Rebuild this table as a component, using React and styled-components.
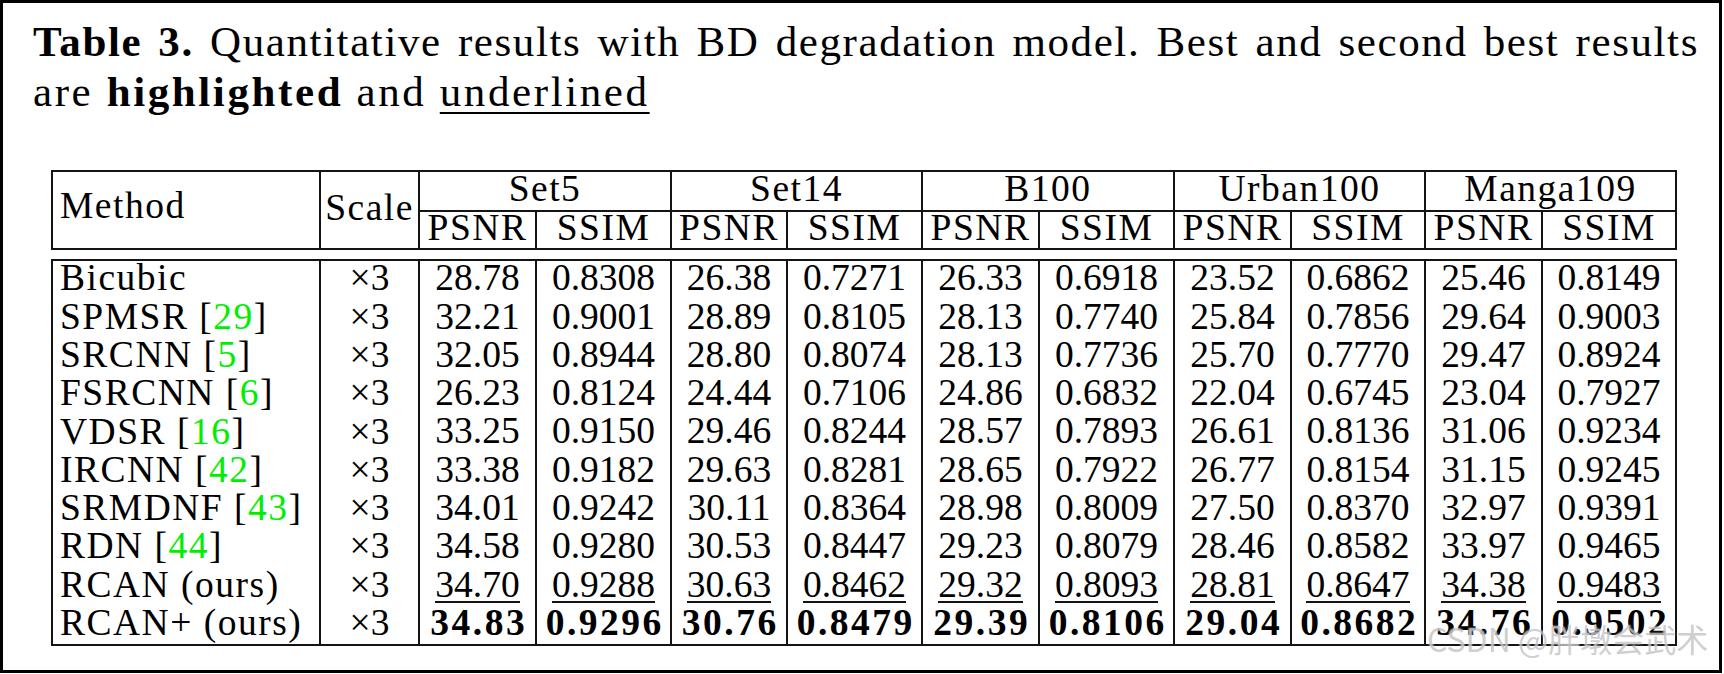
import React from "react";
import styled, { createGlobalStyle } from "styled-components";

const GlobalStyle = createGlobalStyle`
  html, body { margin: 0; padding: 0; background: #fff; }
  body { font-family: "Liberation Serif", "Times New Roman", serif; color: #000; }
`;

const COLS = "268px 99px 117px 135px 116px 135px 117px 135px 117px 134px 117px 134px";
const LINE = "2px solid #141414";

const Frame = styled.div`
  position: relative;
  box-sizing: border-box;
  width: 1722px;
  height: 673px;
  border: 3px solid #000;
  padding: 14px 0 0 30px;
  background: #fff;
`;

const Caption = styled.div`
  width: 1666px;
  font-family: "Liberation Serif", serif;
  font-size: 43px;
  line-height: 50px;
  color: #000;
`;

const CaptionLine = styled.div`
  text-align: justify;
  text-align-last: ${(p) => (p.$justify ? "justify" : "start")};
  letter-spacing: ${(p) => p.$spacing};
  white-space: nowrap;
`;

const Strong = styled.b`
  font-weight: 700;
`;

const Under = styled.span`
  text-decoration: underline;
  text-decoration-thickness: 2px;
  text-underline-offset: 6px;
`;

const TableWrap = styled.div`
  margin: 53px 0 0 18px;
  font-family: "Liberation Serif", serif;
  font-size: 37.5px;
  color: #000;
`;

const HeadGrid = styled.div`
  display: grid;
  grid-template-columns: ${COLS};
  grid-template-rows: 40px 38px;
  width: fit-content;
  border-top: ${LINE};
  border-left: ${LINE};
`;

const HeadCell = styled.div`
  box-sizing: border-box;
  border-right: ${LINE};
  border-bottom: ${LINE};
  display: flex;
  align-items: center;
  justify-content: ${(p) => (p.$left ? "flex-start" : "center")};
  padding: ${(p) => (p.$left ? "0 0 8px 7px" : "0 0 4px 0")};
  grid-row: ${(p) => p.$row};
  grid-column: ${(p) => p.$col};
  letter-spacing: 1.5px;
  line-height: 1;
  white-space: nowrap;
`;

const BodyGrid = styled.div`
  display: grid;
  grid-template-columns: ${COLS};
  grid-auto-rows: 38.3px;
  width: fit-content;
  margin-top: 9px;
  border-top: ${LINE};
  border-left: ${LINE};
  border-bottom: ${LINE};
`;

const Cell = styled.div`
  box-sizing: border-box;
  border-right: ${LINE};
  display: flex;
  align-items: center;
  justify-content: ${(p) => (p.$left ? "flex-start" : "center")};
  padding: ${(p) => (p.$left ? "0 0 4px 7px" : "0 0 4px 0")};
  line-height: 1;
  white-space: nowrap;
  letter-spacing: ${(p) => (p.$text ? "1.5px" : "0")};
`;

const Num = styled.span`
  display: inline-block;
  line-height: 0.9;
  font-weight: ${(p) => (p.$bold ? 700 : 400)};
  letter-spacing: ${(p) => (p.$bold ? "2.5px" : "0")};
  margin-right: ${(p) => (p.$bold ? "-2.5px" : "0")};
  border-bottom: 2px solid ${(p) => (p.$under ? "#141414" : "transparent")};
  margin-top: 2px;
`;

const Ref = styled.span`
  color: #00ee00;
`;

const Watermark = styled.div`
  position: absolute;
  left: 1424px;
  top: 619px;
  font-family: "Noto Sans CJK SC", "Noto Sans", sans-serif;
  font-size: 32px;
  line-height: 1;
  color: rgba(160, 160, 160, 0.5);
  text-shadow: 0 0 2px rgba(255, 255, 255, 0.9);
  white-space: nowrap;
  pointer-events: none;
`;

const datasets = ["Set5", "Set14", "B100", "Urban100", "Manga109"];

const rows = [
  { name: "Bicubic", vals: ["28.78", "0.8308", "26.38", "0.7271", "26.33", "0.6918", "23.52", "0.6862", "25.46", "0.8149"] },
  { name: "SPMSR", ref: "29", vals: ["32.21", "0.9001", "28.89", "0.8105", "28.13", "0.7740", "25.84", "0.7856", "29.64", "0.9003"] },
  { name: "SRCNN", ref: "5", vals: ["32.05", "0.8944", "28.80", "0.8074", "28.13", "0.7736", "25.70", "0.7770", "29.47", "0.8924"] },
  { name: "FSRCNN", ref: "6", vals: ["26.23", "0.8124", "24.44", "0.7106", "24.86", "0.6832", "22.04", "0.6745", "23.04", "0.7927"] },
  { name: "VDSR", ref: "16", vals: ["33.25", "0.9150", "29.46", "0.8244", "28.57", "0.7893", "26.61", "0.8136", "31.06", "0.9234"] },
  { name: "IRCNN", ref: "42", vals: ["33.38", "0.9182", "29.63", "0.8281", "28.65", "0.7922", "26.77", "0.8154", "31.15", "0.9245"] },
  { name: "SRMDNF", ref: "43", vals: ["34.01", "0.9242", "30.11", "0.8364", "28.98", "0.8009", "27.50", "0.8370", "32.97", "0.9391"] },
  { name: "RDN", ref: "44", vals: ["34.58", "0.9280", "30.53", "0.8447", "29.23", "0.8079", "28.46", "0.8582", "33.97", "0.9465"] },
  { name: "RCAN (ours)", under: true, vals: ["34.70", "0.9288", "30.63", "0.8462", "29.32", "0.8093", "28.81", "0.8647", "34.38", "0.9483"] },
  { name: "RCAN+ (ours)", bold: true, vals: ["34.83", "0.9296", "30.76", "0.8479", "29.39", "0.8106", "29.04", "0.8682", "34.76", "0.9502"] },
];

export default function App() {
  return (
    <>
      <GlobalStyle />
      <Frame>
        <Caption>
          <CaptionLine $justify $spacing="1.6px">
            <Strong>Table 3.</Strong> Quantitative results with BD degradation model. Best and second best results
          </CaptionLine>
          <CaptionLine $spacing="2.6px">
            are <Strong>highlighted</Strong> and <Under>underlined</Under>
          </CaptionLine>
        </Caption>

        <TableWrap>
          <HeadGrid>
            <HeadCell $left $row="1 / 3" $col="1">Method</HeadCell>
            <HeadCell $row="1 / 3" $col="2">Scale</HeadCell>
            {datasets.map((d, i) => (
              <HeadCell key={d} $row="1" $col={`${3 + i * 2} / span 2`}>
                {d}
              </HeadCell>
            ))}
            {datasets.map((d, i) => (
              <React.Fragment key={d + "-m"}>
                <HeadCell $row="2" $col={`${3 + i * 2}`}>PSNR</HeadCell>
                <HeadCell $row="2" $col={`${4 + i * 2}`}>SSIM</HeadCell>
              </React.Fragment>
            ))}
          </HeadGrid>

          <BodyGrid>
            {rows.map((r) => (
              <React.Fragment key={r.name}>
                <Cell $left $text>
                  {r.name}
                  {r.ref && (
                    <>
                      &nbsp;[<Ref>{r.ref}</Ref>]
                    </>
                  )}
                </Cell>
                <Cell>×3</Cell>
                {r.vals.map((v, j) => (
                  <Cell key={j}>
                    <Num $bold={r.bold} $under={r.under}>{v}</Num>
                  </Cell>
                ))}
              </React.Fragment>
            ))}
          </BodyGrid>
        </TableWrap>

        <Watermark>CSDN @胖墩会武术</Watermark>
      </Frame>
    </>
  );
}
